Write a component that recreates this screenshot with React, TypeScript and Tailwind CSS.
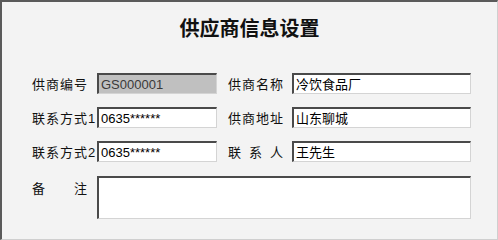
import React from "react";

const cjk = { fontFamily: '"Noto Sans CJK SC", "Liberation Sans", sans-serif' };
const latin = { fontFamily: '"Liberation Sans", "Noto Sans CJK SC", sans-serif' };

function Field({ value, w, gray }: { value: string; w: string; gray?: boolean }) {
  return (
    <div
      className={`${w} h-[21px] flex items-center pl-[2px] border-t-2 border-l-2 border-t-[#4a4a4a] border-l-[#4a4a4a] border-b border-r border-b-[#d4d4d4] border-r-[#d4d4d4] ${
        gray ? "bg-[#c0c0c0] text-[#3a3a3a]" : "bg-white text-black"
      } text-[13px] leading-none whitespace-nowrap overflow-hidden`}
      style={latin}
    >
      {value}
    </div>
  );
}

function Label({ children, w }: { children: React.ReactNode; w: string }) {
  return (
    <div className={`${w} shrink-0 text-[13px] text-[#111] tracking-[1px] leading-none whitespace-nowrap`} style={cjk}>
      {children}
    </div>
  );
}

function Spread({ chars }: { chars: string[] }) {
  return (
    <div className="w-[55px] flex justify-between text-[13px] text-[#111] leading-none" style={cjk}>
      {chars.map((c, i) => (
        <span key={i}>{c}</span>
      ))}
    </div>
  );
}

export default function App() {
  return (
    <div className="w-[498px] h-[240px] bg-[#f3f3f3] border-t-2 border-l-2 border-t-[#5a5a5a] border-l-[#5a5a5a] border-b border-r border-b-[#cfcfcf] border-r-[#cfcfcf] box-border">
      <div className="pt-[14px] h-[38px] flex justify-center">
        <div className="text-[20px] leading-[24px] font-bold text-[#111]" style={cjk}>
          供应商信息设置
        </div>
      </div>
      <div className="pl-[30px] pt-[33px] flex flex-col gap-[13px]">
        <div className="flex items-center">
          <Label w="w-[65px]">供商编号</Label>
          <Field value="GS000001" w="w-[120px]" gray />
          <div className="w-[11px]" />
          <Label w="w-[64px]">供商名称</Label>
          <Field value="冷饮食品厂" w="w-[179px]" />
        </div>
        <div className="flex items-center">
          <Label w="w-[65px]">
            联系方式<span style={latin}>1</span>
          </Label>
          <Field value="0635******" w="w-[120px]" />
          <div className="w-[11px]" />
          <Label w="w-[64px]">供商地址</Label>
          <Field value="山东聊城" w="w-[179px]" />
        </div>
        <div className="flex items-center">
          <Label w="w-[65px]">
            联系方式<span style={latin}>2</span>
          </Label>
          <Field value="0635******" w="w-[120px]" />
          <div className="w-[11px]" />
          <div className="w-[64px] shrink-0">
            <Spread chars={["联", "系", "人"]} />
          </div>
          <Field value="王先生" w="w-[179px]" />
        </div>
        <div className="flex items-start mt-[1px]">
          <div className="w-[65px] shrink-0 pt-[5px]">
            <Spread chars={["备", "注"]} />
          </div>
          <div className="w-[374px] h-[43px] bg-white border-t-2 border-l-2 border-t-[#4a4a4a] border-l-[#4a4a4a] border-b border-r border-b-[#d4d4d4] border-r-[#d4d4d4]" />
        </div>
      </div>
    </div>
  );
}
